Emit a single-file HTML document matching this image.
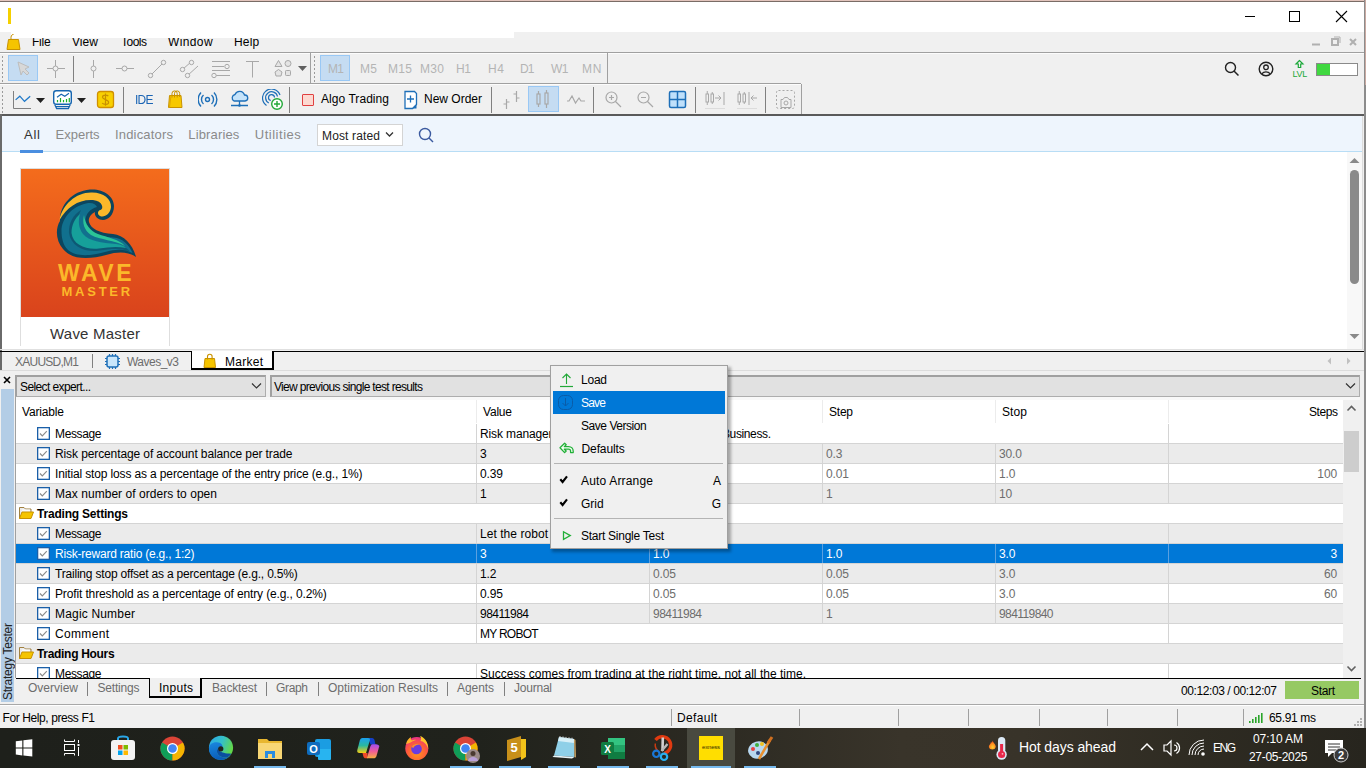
<!DOCTYPE html>
<html><head><meta charset="utf-8"><title>MT5</title>
<style>
html,body{margin:0;padding:0;width:1366px;height:768px;overflow:hidden;background:#f0f0f0}
body{position:relative;font-family:"Liberation Sans",sans-serif}
body div, body svg{position:absolute}
.t{white-space:nowrap}
</style></head><body>
<div style="left:0px;top:0px;width:1366px;height:768px;background:#f0f0f0;"></div>
<div style="left:0px;top:0px;width:1366px;height:32px;background:#fff;"></div>
<div style="left:0px;top:0px;width:1366px;height:1px;background:#e2c4bc;"></div>
<div style="left:0px;top:1px;width:1366px;height:1px;background:#7a6c66;"></div>
<div style="left:10px;top:15px;width:1px;height:2px;background:#6a6a30;"></div>
<div style="left:8px;top:8px;width:3px;height:16px;background:#f5d000;"></div>
<svg style="left:1240px;top:10px;" width="20" height="12" viewBox="0 0 20 12"><path d="M5 6.5h10" stroke="#000" stroke-width="1"/></svg>
<svg style="left:1284px;top:6px;" width="22" height="22" viewBox="0 0 22 22"><rect x="5.5" y="5.5" width="10" height="10" fill="none" stroke="#000" stroke-width="1"/></svg>
<svg style="left:1330px;top:6px;" width="22" height="22" viewBox="0 0 22 22"><path d="M6 5L17 16M17 5L6 16" stroke="#000" stroke-width="1.1"/></svg>
<div style="left:1364px;top:0px;width:2px;height:728px;background:#8c8c8c;"></div>
<div style="left:1365px;top:0px;width:1px;height:85px;background:#c9a9a1;"></div>
<div class="t" style="left:32px;top:36px;font-size:12px;line-height:12px;color:#000;letter-spacing:-0.248px;">File</div>
<div class="t" style="left:72px;top:36px;font-size:12px;line-height:12px;color:#000;letter-spacing:0.068px;">View</div>
<div class="t" style="left:121px;top:36px;font-size:12px;line-height:12px;color:#000;letter-spacing:-0.504px;">Tools</div>
<div class="t" style="left:168px;top:36px;font-size:12px;line-height:12px;color:#000;letter-spacing:0.383px;">Window</div>
<div class="t" style="left:234px;top:36px;font-size:12px;line-height:12px;color:#000;letter-spacing:0.204px;">Help</div>
<div style="left:11px;top:32px;width:503px;height:6px;background:#fff;"></div>
<svg style="left:5px;top:33px;" width="17" height="18" viewBox="0 0 17 18"><path d="M3.5 6.5h10l1.5 10h-13z" fill="#f5c400" stroke="#c89200" stroke-width="1"/><path d="M6 7V4.5C6 2 8 1 8.5 1.5" fill="none" stroke="#c89200" stroke-width="1"/></svg>
<svg style="left:1308px;top:34px;" width="60" height="14" viewBox="0 0 60 14"><path d="M4 10.5h8" stroke="#b0b0b0" stroke-width="2"/><rect x="24" y="5" width="6" height="6" fill="none" stroke="#b0b0b0" stroke-width="2"/><path d="M26 3h6v6" fill="none" stroke="#b0b0b0" stroke-width="1"/><path d="M42 5l6 6M48 5l-6 6" stroke="#b0b0b0" stroke-width="2"/></svg>
<div style="left:0px;top:52px;width:1364px;height:1px;background:#a0a0a0;"></div>
<div style="left:0px;top:53px;width:1364px;height:1px;background:#fcfcfc;"></div>
<div style="left:0px;top:83px;width:801px;height:1px;background:#a0a0a0;"></div>
<div style="left:0px;top:84px;width:801px;height:1px;background:#fcfcfc;"></div>
<div style="left:607px;top:53px;width:1px;height:30px;background:#a0a0a0;"></div>
<div style="left:2px;top:56px;width:1px;height:2px;background:#9a9a9a;"></div>
<div style="left:2px;top:60px;width:1px;height:2px;background:#9a9a9a;"></div>
<div style="left:2px;top:64px;width:1px;height:2px;background:#9a9a9a;"></div>
<div style="left:2px;top:68px;width:1px;height:2px;background:#9a9a9a;"></div>
<div style="left:2px;top:72px;width:1px;height:2px;background:#9a9a9a;"></div>
<div style="left:2px;top:76px;width:1px;height:2px;background:#9a9a9a;"></div>
<div style="left:2px;top:80px;width:1px;height:2px;background:#9a9a9a;"></div>
<div style="left:314px;top:56px;width:1px;height:2px;background:#9a9a9a;"></div>
<div style="left:314px;top:60px;width:1px;height:2px;background:#9a9a9a;"></div>
<div style="left:314px;top:64px;width:1px;height:2px;background:#9a9a9a;"></div>
<div style="left:314px;top:68px;width:1px;height:2px;background:#9a9a9a;"></div>
<div style="left:314px;top:72px;width:1px;height:2px;background:#9a9a9a;"></div>
<div style="left:314px;top:76px;width:1px;height:2px;background:#9a9a9a;"></div>
<div style="left:314px;top:80px;width:1px;height:2px;background:#9a9a9a;"></div>
<div style="left:2px;top:87px;width:1px;height:2px;background:#9a9a9a;"></div>
<div style="left:2px;top:91px;width:1px;height:2px;background:#9a9a9a;"></div>
<div style="left:2px;top:95px;width:1px;height:2px;background:#9a9a9a;"></div>
<div style="left:2px;top:99px;width:1px;height:2px;background:#9a9a9a;"></div>
<div style="left:2px;top:103px;width:1px;height:2px;background:#9a9a9a;"></div>
<div style="left:2px;top:107px;width:1px;height:2px;background:#9a9a9a;"></div>
<div style="left:2px;top:111px;width:1px;height:2px;background:#9a9a9a;"></div>
<div style="left:8px;top:55px;width:30px;height:26px;background:#c5dcf2;box-sizing:border-box;border:1px solid #99c8f5"></div>
<svg style="left:16px;top:60px;" width="16" height="18" viewBox="0 0 16 18"><path d="M2 2L13 7L9 9L13 13L11 15L7 11L5 15Z" fill="#d8d8d8" stroke="#bdbdbd" stroke-width="1"/></svg>
<svg style="left:46px;top:59px;" width="20" height="20" viewBox="0 0 20 20"><path d="M1 9.5h18M9.5 1v18" stroke="#a8a8a8" stroke-width="1"/><circle cx="9.5" cy="9.5" r="2.5" fill="#f0f0f0" stroke="#a8a8a8"/></svg>
<div style="left:73px;top:56px;width:1px;height:26px;background:#808080;"></div>
<svg style="left:84px;top:59px;" width="20" height="20" viewBox="0 0 20 20"><path d="M9.5 1v18" stroke="#a8a8a8"/><circle cx="9.5" cy="9.5" r="2.5" fill="#f0f0f0" stroke="#a8a8a8"/></svg>
<svg style="left:115px;top:59px;" width="20" height="20" viewBox="0 0 20 20"><path d="M1 9.5h18" stroke="#a8a8a8"/><circle cx="9.5" cy="9.5" r="2.5" fill="#f0f0f0" stroke="#a8a8a8"/></svg>
<svg style="left:147px;top:59px;" width="20" height="20" viewBox="0 0 20 20"><path d="M4 16L16 4" stroke="#a8a8a8"/><circle cx="3.5" cy="16.5" r="2.2" fill="#f0f0f0" stroke="#a8a8a8"/><circle cx="16.5" cy="3.5" r="2.2" fill="#f0f0f0" stroke="#a8a8a8"/></svg>
<svg style="left:179px;top:59px;" width="22" height="20" viewBox="0 0 22 20"><path d="M4 10L12 3M8 17L19 7" stroke="#a8a8a8"/><circle cx="3.5" cy="10.5" r="2.2" fill="#f0f0f0" stroke="#a8a8a8"/><circle cx="12.5" cy="3.5" r="2.2" fill="#f0f0f0" stroke="#a8a8a8"/><circle cx="8.5" cy="16.5" r="2.2" fill="#f0f0f0" stroke="#a8a8a8"/></svg>
<svg style="left:211px;top:59px;" width="22" height="20" viewBox="0 0 22 20"><path d="M1 2.5h18M1 7.5h12M1 11.5h18M5 16.5h14" stroke="#a8a8a8"/><circle cx="16" cy="7.5" r="2.2" fill="#f0f0f0" stroke="#a8a8a8"/><circle cx="3" cy="16.5" r="2.2" fill="#f0f0f0" stroke="#a8a8a8"/></svg>
<svg style="left:245px;top:59px;" width="18" height="20" viewBox="0 0 18 20"><path d="M1 2.5h13M7.5 2.5v16" stroke="#a8a8a8"/></svg>
<svg style="left:274px;top:59px;" width="22" height="20" viewBox="0 0 22 20"><path d="M4.5 1.5L8 7.5H1z" fill="#e4e4e4" stroke="#a8a8a8"/><circle cx="14" cy="4.5" r="3" fill="#e4e4e4" stroke="#a8a8a8"/><path d="M4.5 10.5L8 13L7 17H2L1 13z" fill="#e4e4e4" stroke="#a8a8a8"/><rect x="11.5" y="11.5" width="5" height="5" rx="0.8" fill="#e4e4e4" stroke="#a8a8a8"/></svg>
<svg style="left:298px;top:66px;" width="9" height="6" viewBox="0 0 9 6"><path d="M0 0h9L4.5 5z" fill="#606060"/></svg>
<div style="left:310px;top:53px;width:1px;height:30px;background:#a0a0a0;"></div>
<div style="left:320px;top:55px;width:30px;height:26px;background:#c5dcf2;box-sizing:border-box;border:1px solid #99c8f5"></div>
<div class="t" style="left:328px;top:63px;font-size:12px;line-height:12px;color:#b4b4b4;letter-spacing:-0.672px;">M1</div>
<div class="t" style="left:360px;top:63px;font-size:12px;line-height:12px;color:#b4b4b4;letter-spacing:0.328px;">M5</div>
<div class="t" style="left:388px;top:63px;font-size:12px;line-height:12px;color:#b4b4b4;letter-spacing:0.328px;">M15</div>
<div class="t" style="left:420px;top:63px;font-size:12px;line-height:12px;color:#b4b4b4;letter-spacing:0.328px;">M30</div>
<div class="t" style="left:456px;top:63px;font-size:12px;line-height:12px;color:#b4b4b4;letter-spacing:-0.344px;">H1</div>
<div class="t" style="left:488px;top:63px;font-size:12px;line-height:12px;color:#b4b4b4;letter-spacing:0.656px;">H4</div>
<div class="t" style="left:520px;top:63px;font-size:12px;line-height:12px;color:#b4b4b4;letter-spacing:-0.844px;">D1</div>
<div class="t" style="left:551px;top:63px;font-size:12px;line-height:12px;color:#b4b4b4;letter-spacing:-0.500px;">W1</div>
<div class="t" style="left:582px;top:63px;font-size:12px;line-height:12px;color:#b4b4b4;letter-spacing:0.828px;">MN</div>
<div style="left:801px;top:84px;width:1px;height:30px;background:#a0a0a0;"></div>
<svg style="left:12px;top:90px;" width="20" height="20" viewBox="0 0 20 20"><path d="M1.5 1v17.5H19" fill="none" stroke="#808080"/><path d="M3.6 9.9L7.8 6.2L12.5 11.3L18.2 6.2" fill="none" stroke="#1e78c8" stroke-width="1.2"/></svg>
<svg style="left:36px;top:98px;" width="9" height="6" viewBox="0 0 9 6"><path d="M0 0h9L4.5 5z" fill="#202020"/></svg>
<svg style="left:52px;top:89px;" width="22" height="21" viewBox="0 0 22 21"><rect x="1.7" y="1.7" width="17.6" height="13.6" rx="2.6" fill="#fff" stroke="#1565b0" stroke-width="1.4"/><path d="M2.8 15.8L4.6 19.6H16.4L18.2 15.8M3.8 17.7H17.2" fill="none" stroke="#1565b0" stroke-width="1.2"/><path d="M5 8.2L9.2 5.2L12.8 7.3L17 4.3" fill="none" stroke="#1565b0" stroke-width="1.1"/><path d="M5.5 11v2.2M8.5 9v4.2M11.5 11v2.2M14.5 10v3.2M17.3 9v4.2" stroke="#18b028" stroke-width="1.2"/></svg>
<svg style="left:77px;top:98px;" width="9" height="6" viewBox="0 0 9 6"><path d="M0 0h9L4.5 5z" fill="#202020"/></svg>
<svg style="left:96px;top:90px;" width="19" height="19" viewBox="0 0 19 19"><rect x="1.5" y="1.5" width="16" height="16" rx="2.6" fill="#f8d000" stroke="#d09000" stroke-width="1.3"/><path d="M12.3 6.2C11.3 4.8 6.5 4.5 6.5 7.3C6.5 10 12.6 9.2 12.6 12.2C12.6 15.2 7.6 14.8 6.2 13.2M9.5 3.5V15.8" fill="none" stroke="#c89000" stroke-width="1.2"/></svg>
<div style="left:123px;top:87px;width:1px;height:26px;background:#808080;"></div>
<div class="t" style="left:135px;top:94px;font-size:12px;line-height:12px;color:#1a64b4;letter-spacing:-0.758px;transform:scaleY(1.08);transform-origin:0 100%">IDE</div>
<svg style="left:166px;top:89px;" width="19" height="20" viewBox="0 0 19 20"><path d="M3.5 6.5h11.5l1 12h-13.5z" fill="#f7c800" stroke="#c89200" stroke-width="1"/><path d="M6 8.5V4.5a2.6 2.6 0 0 1 5.2 0V8.5M8.5 8.5V4.5a2.6 2.6 0 0 1 5.2 0V8" fill="none" stroke="#c89200" stroke-width="1"/><path d="M3.5 18.5L5 6.5" stroke="#e0a800" stroke-width="1"/></svg>
<svg style="left:198px;top:90px;" width="20" height="20" viewBox="0 0 20 20"><circle cx="9.5" cy="9.5" r="2" fill="none" stroke="#1e6fb8" stroke-width="1.4"/><path d="M5.5 5a6 6 0 0 0 0 9M13.5 5a6 6 0 0 1 0 9M3 2.5a10 10 0 0 0 0 14M16 2.5a10 10 0 0 1 0 14" fill="none" stroke="#1e6fb8" stroke-width="1.4"/></svg>
<svg style="left:230px;top:89px;" width="20" height="21" viewBox="0 0 20 21"><path d="M4 12a3.5 3.5 0 0 1 1-6.5a5 5 0 0 1 9.5 0.5a3 3 0 0 1 0.5 6z" fill="#c5e3fa" stroke="#1e6fb8" stroke-width="1.3"/><path d="M9.5 12v5M1 16.5h17" stroke="#1e6fb8" stroke-width="1.3"/><circle cx="9.5" cy="16.5" r="1.3" fill="#1e6fb8"/></svg>
<svg style="left:262px;top:89px;" width="22" height="22" viewBox="0 0 22 22"><path d="M4.5 16.5A9 9 0 1 1 18 6" fill="none" stroke="#1e6fb8" stroke-width="1.2"/><path d="M6.8 14A6 6 0 1 1 15.5 7.5" fill="none" stroke="#1e6fb8" stroke-width="1.2"/><path d="M8.8 11.5A3 3 0 1 1 12.5 8.5" fill="none" stroke="#1e6fb8" stroke-width="1.2"/><circle cx="15" cy="15" r="5.3" fill="#fff" stroke="#22a838" stroke-width="1.4"/><path d="M15 12v6M12 15h6" stroke="#22a838" stroke-width="1.4"/></svg>
<div style="left:289px;top:87px;width:1px;height:26px;background:#808080;"></div>
<div style="left:302px;top:94px;width:12px;height:12px;background:#fcd9d1;box-sizing:border-box;border:1px solid #e04040;border-radius:1px"></div>
<div class="t" style="left:321px;top:93px;font-size:12px;line-height:12px;color:#000;letter-spacing:0.055px;">Algo Trading</div>
<svg style="left:403px;top:90px;" width="16" height="20" viewBox="0 0 16 20"><path d="M2 1.5h9.5l2 2v11l-4 4H2z" fill="#fff" stroke="#1e6fb8" stroke-width="1.3"/><path d="M9.5 18.5l4-4v4z" fill="#1e6fb8"/><path d="M7.5 5.5v7M4 9h7" stroke="#1e6fb8" stroke-width="1.3"/></svg>
<div class="t" style="left:424px;top:93px;font-size:12px;line-height:12px;color:#000;letter-spacing:-0.002px;">New Order</div>
<div style="left:491px;top:87px;width:1px;height:26px;background:#808080;"></div>
<svg style="left:502px;top:90px;" width="20" height="20" viewBox="0 0 20 20"><path d="M4.5 9v10M4.5 14h-3M4.5 12h3M14.5 1v11M14.5 4h-3M14.5 8h3" stroke="#a8a8a8" stroke-width="1.2"/></svg>
<div style="left:528px;top:86px;width:31px;height:26px;background:#c5dcf2;box-sizing:border-box;border:1px solid #99c8f5"></div>
<svg style="left:533px;top:89px;" width="20" height="20" viewBox="0 0 20 20"><rect x="4" y="5" width="3" height="10" fill="none" stroke="#a8a8a8" stroke-width="1.2"/><path d="M5.5 2v3M5.5 15v3" stroke="#a8a8a8" stroke-width="1.2"/><rect x="12" y="4" width="3" height="11" fill="none" stroke="#a8a8a8" stroke-width="1.2"/><path d="M13.5 1v3M13.5 15v4" stroke="#a8a8a8" stroke-width="1.2"/></svg>
<svg style="left:566px;top:90px;" width="20" height="20" viewBox="0 0 20 20"><path d="M1 11h2L6 6L9.5 13L13 8L15 11h4" fill="none" stroke="#a8a8a8" stroke-width="1.2"/></svg>
<div style="left:593px;top:87px;width:1px;height:26px;background:#808080;"></div>
<svg style="left:604px;top:90px;" width="20" height="20" viewBox="0 0 20 20"><circle cx="7.5" cy="7.5" r="5.5" fill="none" stroke="#a8a8a8" stroke-width="1.2"/><path d="M11.5 11.5L17 17M7.5 5v5M5 7.5h5" stroke="#a8a8a8" stroke-width="1.2"/></svg>
<svg style="left:636px;top:90px;" width="20" height="20" viewBox="0 0 20 20"><circle cx="7.5" cy="7.5" r="5.5" fill="none" stroke="#a8a8a8" stroke-width="1.2"/><path d="M11.5 11.5L17 17M5 7.5h5" stroke="#a8a8a8" stroke-width="1.2"/></svg>
<svg style="left:668px;top:90px;" width="20" height="20" viewBox="0 0 20 20"><rect x="1.5" y="1.5" width="16" height="16" rx="1.5" fill="#bfe0fb" stroke="#1e6fb8" stroke-width="1.5"/><path d="M9.5 1.5v16M1.5 9.5h16" stroke="#1e6fb8" stroke-width="1.5"/></svg>
<div style="left:695px;top:87px;width:1px;height:26px;background:#808080;"></div>
<svg style="left:704px;top:89px;" width="22" height="22" viewBox="0 0 22 22"><rect x="2" y="5" width="2.5" height="8" fill="none" stroke="#a8a8a8"/><path d="M3.25 2v3M3.25 13v3" stroke="#a8a8a8"/><rect x="7" y="5" width="2.5" height="8" fill="none" stroke="#a8a8a8"/><path d="M8.25 3v2M8.25 13v2" stroke="#a8a8a8"/><path d="M11 9h6M14.5 6.5L17 9L14.5 11.5M20 3v13" fill="none" stroke="#a8a8a8"/><path d="M1 19.5h20" stroke="#dcdcdc"/></svg>
<svg style="left:736px;top:89px;" width="22" height="22" viewBox="0 0 22 22"><rect x="2" y="5" width="2.5" height="8" fill="none" stroke="#a8a8a8"/><path d="M3.25 2v3M3.25 13v3" stroke="#a8a8a8"/><rect x="7" y="5" width="2.5" height="8" fill="none" stroke="#a8a8a8"/><path d="M8.25 3v2M8.25 13v2" stroke="#a8a8a8"/><path d="M13 3v13M15 9h6M17.5 6.5L15 9L17.5 11.5" fill="none" stroke="#a8a8a8"/><path d="M1 19.5h20" stroke="#dcdcdc"/></svg>
<div style="left:765px;top:87px;width:1px;height:26px;background:#808080;"></div>
<svg style="left:775px;top:89px;" width="22" height="22" viewBox="0 0 22 22"><rect x="1.5" y="1.5" width="18" height="18" rx="2" fill="none" stroke="#a8a8a8" stroke-dasharray="2 2"/><path d="M6 10.5h2l1.5-2h3l1.5 2h2v8h-10z" fill="none" stroke="#a8a8a8"/><circle cx="11" cy="14" r="2" fill="none" stroke="#a8a8a8"/></svg>
<svg style="left:1224px;top:61px;" width="18" height="18" viewBox="0 0 18 18"><circle cx="6.5" cy="6.5" r="5" fill="none" stroke="#222" stroke-width="1.4"/><path d="M10 10L14.5 14.5" stroke="#222" stroke-width="1.5"/></svg>
<svg style="left:1258px;top:61px;" width="17" height="17" viewBox="0 0 17 17"><circle cx="8" cy="8" r="6.8" fill="none" stroke="#222" stroke-width="1.4"/><circle cx="8" cy="6.3" r="2.3" fill="none" stroke="#222" stroke-width="1.3"/><path d="M3.8 12.8a5 4 0 0 1 8.4 0" fill="none" stroke="#222" stroke-width="1.3"/></svg>
<svg style="left:1292px;top:59px;" width="16" height="19" viewBox="0 0 16 19"><path d="M7.5 1.5L4 5h2.3v3.5h2.4V5H11z" fill="none" stroke="#1aa838" stroke-width="1.2"/><text x="7.8" y="18.3" font-family="Liberation Sans" font-size="9" fill="#1aa838" text-anchor="middle" letter-spacing="-0.3">LVL</text></svg>
<div style="left:1316px;top:63px;width:42px;height:13px;background:#fff;box-sizing:border-box;border:1px solid #8a8a8a"></div>
<div style="left:1317px;top:64px;width:13px;height:11px;background:#40d840;"></div>
<div style="left:0px;top:114px;width:1364px;height:2px;background:#5a5a5a;"></div>
<div style="left:0px;top:114px;width:2px;height:257px;background:#6a6a6a;"></div>
<div style="left:2px;top:116px;width:1360px;height:35px;background:#eef5fd;"></div>
<div style="left:2px;top:151px;width:1360px;height:1px;background:#b8ddf5;"></div>
<div style="left:2px;top:152px;width:1360px;height:198px;background:#fff;"></div>
<div style="left:1362px;top:116px;width:1px;height:234px;background:#dcdcdc;"></div>
<div class="t" style="left:24px;top:128px;font-size:13px;line-height:13px;color:#333;letter-spacing:0.773px;">All</div>
<div style="left:20px;top:150px;width:23px;height:3px;background:#4a8ee0;"></div>
<div class="t" style="left:55.6px;top:128px;font-size:13px;line-height:13px;color:#8a8a8a;letter-spacing:-0.013px;">Experts</div>
<div class="t" style="left:115px;top:128px;font-size:13px;line-height:13px;color:#8a8a8a;letter-spacing:0.181px;">Indicators</div>
<div class="t" style="left:188.3px;top:128px;font-size:13px;line-height:13px;color:#8a8a8a;letter-spacing:0.143px;">Libraries</div>
<div class="t" style="left:254.8px;top:128px;font-size:13px;line-height:13px;color:#8a8a8a;letter-spacing:0.512px;">Utilities</div>
<div style="left:317px;top:124px;width:86px;height:22px;background:#fff;box-sizing:border-box;border:1px solid #d4d4d4"></div>
<div class="t" style="left:322px;top:130px;font-size:12px;line-height:12px;color:#222;letter-spacing:0.144px;">Most rated</div>
<svg style="left:385px;top:131px;" width="10" height="7" viewBox="0 0 10 7"><path d="M1 1.5L4.5 5L8 1.5" fill="none" stroke="#333" stroke-width="1.3"/></svg>
<svg style="left:418px;top:127px;" width="17" height="16" viewBox="0 0 17 16"><circle cx="7" cy="7" r="5.5" fill="none" stroke="#3b5aa0" stroke-width="1.4"/><path d="M11 11L15 15" stroke="#3b5aa0" stroke-width="1.5"/></svg>
<div style="left:20px;top:168px;width:150px;height:178px;background:#fff;box-sizing:border-box;border:1px solid #dedede;border-bottom:none"></div>
<div style="left:21px;top:169px;width:148px;height:148px;background:linear-gradient(#f46c1c,#d9431c);"></div>
<svg style="left:21px;top:169px" width="148" height="148" viewBox="0 0 148 148">
<path d="M39 52C38 38 50 22 69 20.5C82 19.5 93 27 93 37C93 46 87 51 82 51C77 51 73 47 74 43C70 45 67 49 68 53C70 60 78 64 92 65C103 66 112 76 115 88C108 83 98 82 85 86C70 90 52 92 42 80C35 72 34 60 39 52Z" fill="#0b465f"/>
<path d="M38.5 51C41 36 55 23.5 70 23.5C82 23 90.5 30 90 38C89.5 45 83 49 79 47C76 45.5 76.5 41.5 79.5 41C83 40 82 32 72 31C58 30 46 38 38.5 51Z" fill="#fbb82a"/>
<path d="M40.5 62C40.5 50 50 38 65 34.5C71 33 75 35 76 38C69 40 64 45 64.5 53C65.5 63 77 68 92 68.5C102 69 108 76 111.5 84C104 80 96 79.5 84 83C70 87 55 88 47 81C42 76 40.5 69 40.5 62Z" fill="#11708e"/>
<path d="M48 64C47.5 54 52 46 60 41C56 49 55.5 57 60 64C66 72 80 75 95 75.5C102 76 106 79 109 82.5C100 79 90 79.5 79 81.5C65 84 50 78 48 64Z" fill="#0b465f" opacity="0.55"/>
<path d="M50.5 64C50.5 56 54 49 59 45C57 52 57.5 59 62 65C68 72 81 74 95 75C100 75.5 103 77 105 79C96 77 88 78 78 79.5C65 81 52 76 50.5 64Z" fill="#16a09a"/>
<path d="M63 46C61 54 63 61 70 66C79 71 94 71 104 77C98 70 86 68.5 77 65C69 62 64 55 63 46Z" fill="#2bc497"/>
<text x="75" y="112" font-family="Liberation Sans" font-size="23" font-weight="bold" fill="#fbb82a" text-anchor="middle" letter-spacing="2.5">WAVE</text>
<text x="76.2" y="126.6" font-family="Liberation Sans" font-size="13" font-weight="bold" fill="#fbb82a" text-anchor="middle" letter-spacing="2.75">MASTER</text>
</svg>

<div class="t" style="left:50px;top:326px;font-size:15px;line-height:15px;color:#333;letter-spacing:0.220px;">Wave Master</div>
<div style="left:1347px;top:152px;width:15px;height:198px;background:#f8f8f8;"></div>
<svg style="left:1349px;top:157px;" width="11" height="7" viewBox="0 0 11 7"><path d="M0.5 6L5.5 1L10.5 6z" fill="#8a8a8a"/></svg>
<div style="left:1350px;top:170px;width:9px;height:114px;background:#8a8a8a;border-radius:4.5px"></div>
<svg style="left:1349px;top:333px;" width="11" height="7" viewBox="0 0 11 7"><path d="M0.5 1L5.5 6L10.5 1z" fill="#8a8a8a"/></svg>
<div style="left:0px;top:349px;width:1364px;height:1px;background:#e0e0e0;"></div>
<div style="left:0px;top:351px;width:1364px;height:1px;background:#000;"></div>
<div style="left:2px;top:352px;width:1362px;height:18px;background:#f0f0f0;"></div>
<div style="left:0px;top:370px;width:1364px;height:1px;background:#dcdcdc;"></div>
<div class="t" style="left:15px;top:356px;font-size:12px;line-height:12px;color:#6d6d6d;letter-spacing:-0.752px;">XAUUSD,M1</div>
<div style="left:92px;top:354px;width:1px;height:14px;background:#808080;"></div>
<svg style="left:104px;top:353px;" width="18" height="18" viewBox="0 0 18 18"><rect x="3" y="3" width="11" height="11" rx="2" fill="#c9e6fb" stroke="#1e6fb8" stroke-width="1.5"/><path d="M5.5 1v2M8.5 1v2M11.5 1v2M5.5 14v2M8.5 14v2M11.5 14v2M1 5.5h2M1 8.5h2M1 11.5h2M14 5.5h2M14 8.5h2M14 11.5h2" stroke="#1e6fb8" stroke-width="1.2"/></svg>
<div class="t" style="left:127px;top:356px;font-size:12px;line-height:12px;color:#6d6d6d;letter-spacing:-0.511px;">Waves_v3</div>
<div style="left:191px;top:351px;width:83px;height:19px;background:#fff;box-sizing:border-box;border:1px solid #000;border-top:none;border-width:0 2px 2px 1px"></div>
<svg style="left:203px;top:353px;" width="14" height="16" viewBox="0 0 14 16"><path d="M2 5.5h9.5l1 9h-11.5z" fill="#f5c400" stroke="#c89200"/><path d="M4.5 6.5V3.5a2.3 2.3 0 0 1 4.6 0v3" fill="none" stroke="#c89200" stroke-width="1.1"/></svg>
<div class="t" style="left:225px;top:356px;font-size:12px;line-height:12px;color:#000;letter-spacing:0.263px;">Market</div>
<svg style="left:1324px;top:355px;" width="30" height="12" viewBox="0 0 30 12"><path d="M7 2.5L3.5 6L7 9.5z" fill="#c0c0c0"/><path d="M23 2.5L26.5 6L23 9.5z" fill="#c0c0c0"/></svg>
<div style="left:0px;top:371px;width:1364px;height:334px;background:#f0f0f0;"></div>
<svg style="left:2px;top:375px;" width="10" height="10" viewBox="0 0 10 10"><path d="M2 2L8 8M8 2L2 8" stroke="#000" stroke-width="1.6"/></svg>
<div style="left:1px;top:389px;width:13px;height:313px;background:#b3cde6;"></div>
<div class="t" style="left:-42px;top:644px;width:100px;height:12px;font-size:12px;line-height:12px;color:#222;letter-spacing:-0.249px;transform:rotate(-90deg);transform-origin:50% 50%;text-align:left">Strategy Tester</div>
<div style="left:15px;top:397px;width:1px;height:281px;background:#a0a0a0;"></div>
<div style="left:15px;top:375px;width:251px;height:22px;background:#e1e1e1;box-sizing:border-box;border:1px solid #adadad;border-top:2px solid #a0a0a0;border-left:2px solid #a0a0a0"></div>
<div class="t" style="left:20px;top:381px;font-size:12px;line-height:12px;color:#000;letter-spacing:-0.603px;">Select expert...</div>
<svg style="left:251px;top:382px;" width="11" height="8" viewBox="0 0 11 8"><path d="M1 1.5L5.5 6L10 1.5" fill="none" stroke="#333" stroke-width="1.2"/></svg>
<div style="left:270px;top:375px;width:1090px;height:22px;background:#e1e1e1;box-sizing:border-box;border:1px solid #adadad;border-top:2px solid #a0a0a0;border-left:2px solid #a0a0a0"></div>
<div class="t" style="left:274px;top:381px;font-size:12px;line-height:12px;color:#000;letter-spacing:-0.673px;">View previous single test results</div>
<svg style="left:1345px;top:382px;" width="11" height="8" viewBox="0 0 11 8"><path d="M1 1.5L5.5 6L10 1.5" fill="none" stroke="#333" stroke-width="1.2"/></svg>
<div style="left:16px;top:397px;width:1344px;height:3px;background:#f8f8f8;"></div>
<div style="left:16px;top:400px;width:1327px;height:278px;background:#fff;"></div>
<div style="left:476px;top:400px;width:1px;height:23px;background:#ececec;"></div>
<div style="left:649px;top:400px;width:1px;height:23px;background:#ececec;"></div>
<div style="left:822px;top:400px;width:1px;height:23px;background:#ececec;"></div>
<div style="left:995px;top:400px;width:1px;height:23px;background:#ececec;"></div>
<div style="left:1168px;top:400px;width:1px;height:23px;background:#ececec;"></div>
<div class="t" style="left:22px;top:406px;font-size:12px;line-height:12px;color:#000;letter-spacing:-0.163px;">Variable</div>
<div class="t" style="left:483px;top:406px;font-size:12px;line-height:12px;color:#000;letter-spacing:-0.203px;">Value</div>
<div class="t" style="left:656px;top:406px;font-size:12px;line-height:12px;color:#000;letter-spacing:-0.086px;">Start</div>
<div class="t" style="left:829px;top:406px;font-size:12px;line-height:12px;color:#000;letter-spacing:-0.229px;">Step</div>
<div class="t" style="left:1002px;top:406px;font-size:12px;line-height:12px;color:#000;letter-spacing:0.104px;">Stop</div>
<div class="t" style="left:1309px;top:406px;font-size:12px;line-height:12px;color:#000;letter-spacing:-0.422px;">Steps</div>
<div style="left:16px;top:423px;width:1327px;height:255px;overflow:hidden">
<div style="left:0px;top:1px;width:1327px;height:19px;background:#fff;"></div>
<div style="left:0px;top:20px;width:1327px;height:1px;background:#d4d4d4;"></div>
<svg style="left:21px;top:4px;" width="13" height="13" viewBox="0 0 13 13"><rect x="0.65" y="0.65" width="11.7" height="11.7" fill="#fff" stroke="#1a5fa8" stroke-width="1.3"/><path d="M3 6.5L5.3 8.8L9.8 4.2" fill="none" stroke="#8c8c8c" stroke-width="1.2"/></svg>
<div class="t" style="left:39px;top:5px;font-size:12px;line-height:12px;color:#000;letter-spacing:-0.367px;">Message</div>
<div style="left:460px;top:1px;width:1px;height:19px;background:#d4d4d4;"></div>
<div style="left:1152px;top:1px;width:1px;height:19px;background:#d4d4d4;"></div>
<div class="t" style="left:464px;top:5px;font-size:12px;line-height:12px;color:#000;letter-spacing:-0.13px;">Risk management is the key</div>
<div class="t" style="left:706px;top:5px;font-size:12px;line-height:12px;color:#000;letter-spacing:-0.379px;">Business.</div>
<div style="left:0px;top:21px;width:1327px;height:19px;background:#ebebeb;"></div>
<div style="left:0px;top:40px;width:1327px;height:1px;background:#d4d4d4;"></div>
<svg style="left:21px;top:24px;" width="13" height="13" viewBox="0 0 13 13"><rect x="0.65" y="0.65" width="11.7" height="11.7" fill="#fff" stroke="#1a5fa8" stroke-width="1.3"/><path d="M3 6.5L5.3 8.8L9.8 4.2" fill="none" stroke="#8c8c8c" stroke-width="1.2"/></svg>
<div class="t" style="left:39px;top:25px;font-size:12px;line-height:12px;color:#000;letter-spacing:-0.108px;">Risk percentage of account balance per trade</div>
<div style="left:460px;top:21px;width:1px;height:19px;background:#d4d4d4;"></div>
<div style="left:633px;top:21px;width:1px;height:19px;background:#d4d4d4;"></div>
<div style="left:806px;top:21px;width:1px;height:19px;background:#d4d4d4;"></div>
<div style="left:979px;top:21px;width:1px;height:19px;background:#d4d4d4;"></div>
<div style="left:1152px;top:21px;width:1px;height:19px;background:#d4d4d4;"></div>
<div class="t" style="left:464px;top:25px;font-size:12px;line-height:12px;color:#000;letter-spacing:-0.13px;">3</div>
<div class="t" style="left:637px;top:25px;font-size:12px;line-height:12px;color:#6d6d6d;letter-spacing:-0.13px;">3</div>
<div class="t" style="left:810px;top:25px;font-size:12px;line-height:12px;color:#6d6d6d;letter-spacing:-0.13px;">0.3</div>
<div class="t" style="left:983px;top:25px;font-size:12px;line-height:12px;color:#6d6d6d;letter-spacing:-0.13px;">30.0</div>
<div style="left:0px;top:41px;width:1327px;height:19px;background:#fff;"></div>
<div style="left:0px;top:60px;width:1327px;height:1px;background:#d4d4d4;"></div>
<svg style="left:21px;top:44px;" width="13" height="13" viewBox="0 0 13 13"><rect x="0.65" y="0.65" width="11.7" height="11.7" fill="#fff" stroke="#1a5fa8" stroke-width="1.3"/><path d="M3 6.5L5.3 8.8L9.8 4.2" fill="none" stroke="#8c8c8c" stroke-width="1.2"/></svg>
<div class="t" style="left:39px;top:45px;font-size:12px;line-height:12px;color:#000;letter-spacing:-0.140px;">Initial stop loss as a percentage of the entry price (e.g., 1%)</div>
<div style="left:460px;top:41px;width:1px;height:19px;background:#d4d4d4;"></div>
<div style="left:633px;top:41px;width:1px;height:19px;background:#d4d4d4;"></div>
<div style="left:806px;top:41px;width:1px;height:19px;background:#d4d4d4;"></div>
<div style="left:979px;top:41px;width:1px;height:19px;background:#d4d4d4;"></div>
<div style="left:1152px;top:41px;width:1px;height:19px;background:#d4d4d4;"></div>
<div class="t" style="left:464px;top:45px;font-size:12px;line-height:12px;color:#000;letter-spacing:-0.13px;">0.39</div>
<div class="t" style="left:637px;top:45px;font-size:12px;line-height:12px;color:#6d6d6d;letter-spacing:-0.13px;">0.01</div>
<div class="t" style="left:810px;top:45px;font-size:12px;line-height:12px;color:#6d6d6d;letter-spacing:-0.13px;">0.01</div>
<div class="t" style="left:983px;top:45px;font-size:12px;line-height:12px;color:#6d6d6d;letter-spacing:-0.13px;">1.0</div>
<div class="t" style="left:1321px;top:45px;font-size:12px;line-height:12px;color:#6d6d6d;letter-spacing:-0.13px;right:auto;transform:translateX(-100%)">100</div>
<div style="left:0px;top:61px;width:1327px;height:19px;background:#ebebeb;"></div>
<div style="left:0px;top:80px;width:1327px;height:1px;background:#d4d4d4;"></div>
<svg style="left:21px;top:64px;" width="13" height="13" viewBox="0 0 13 13"><rect x="0.65" y="0.65" width="11.7" height="11.7" fill="#fff" stroke="#1a5fa8" stroke-width="1.3"/><path d="M3 6.5L5.3 8.8L9.8 4.2" fill="none" stroke="#8c8c8c" stroke-width="1.2"/></svg>
<div class="t" style="left:39px;top:65px;font-size:12px;line-height:12px;color:#000;letter-spacing:0.046px;">Max number of orders to open</div>
<div style="left:460px;top:61px;width:1px;height:19px;background:#d4d4d4;"></div>
<div style="left:633px;top:61px;width:1px;height:19px;background:#d4d4d4;"></div>
<div style="left:806px;top:61px;width:1px;height:19px;background:#d4d4d4;"></div>
<div style="left:979px;top:61px;width:1px;height:19px;background:#d4d4d4;"></div>
<div style="left:1152px;top:61px;width:1px;height:19px;background:#d4d4d4;"></div>
<div class="t" style="left:464px;top:65px;font-size:12px;line-height:12px;color:#000;letter-spacing:-0.13px;">1</div>
<div class="t" style="left:637px;top:65px;font-size:12px;line-height:12px;color:#6d6d6d;letter-spacing:-0.13px;">1</div>
<div class="t" style="left:810px;top:65px;font-size:12px;line-height:12px;color:#6d6d6d;letter-spacing:-0.13px;">1</div>
<div class="t" style="left:983px;top:65px;font-size:12px;line-height:12px;color:#6d6d6d;letter-spacing:-0.13px;">10</div>
<div style="left:0px;top:81px;width:1327px;height:19px;background:#fff;"></div>
<div style="left:0px;top:100px;width:1327px;height:1px;background:#d4d4d4;"></div>
<svg style="left:2px;top:82px;" width="17" height="15" viewBox="0 0 17 15"><path d="M1.5 13.5V2.5h4.5l1.5 1.5h5.5v3" fill="#ececec" stroke="#a08040" stroke-width="1"/><rect x="4" y="4.5" width="8" height="4" fill="#fafafa"/><path d="M1.5 13.5L4 7h11.5L13 13.5z" fill="#f5c400" stroke="#c89200" stroke-width="1" stroke-linejoin="round"/></svg>
<div class="t" style="left:21px;top:85px;font-size:12px;line-height:12px;color:#000;letter-spacing:-0.201px;font-weight:bold">Trading Settings</div>
<div style="left:0px;top:101px;width:1327px;height:19px;background:#ebebeb;"></div>
<div style="left:0px;top:120px;width:1327px;height:1px;background:#d4d4d4;"></div>
<svg style="left:21px;top:104px;" width="13" height="13" viewBox="0 0 13 13"><rect x="0.65" y="0.65" width="11.7" height="11.7" fill="#fff" stroke="#1a5fa8" stroke-width="1.3"/><path d="M3 6.5L5.3 8.8L9.8 4.2" fill="none" stroke="#8c8c8c" stroke-width="1.2"/></svg>
<div class="t" style="left:39px;top:105px;font-size:12px;line-height:12px;color:#000;letter-spacing:-0.367px;">Message</div>
<div style="left:460px;top:101px;width:1px;height:19px;background:#d4d4d4;"></div>
<div style="left:1152px;top:101px;width:1px;height:19px;background:#d4d4d4;"></div>
<div class="t" style="left:464px;top:105px;font-size:12px;line-height:12px;color:#000;letter-spacing:0.051px;">Let the robot</div>
<div style="left:0px;top:121px;width:1327px;height:19px;background:#0078d7;"></div>
<div style="left:0px;top:140px;width:1327px;height:1px;background:#d4d4d4;"></div>
<svg style="left:21px;top:124px;" width="13" height="13" viewBox="0 0 13 13"><rect x="0.65" y="0.65" width="11.7" height="11.7" fill="#fff" stroke="#1a5fa8" stroke-width="1.3"/><path d="M3 6.5L5.3 8.8L9.8 4.2" fill="none" stroke="#8c8c8c" stroke-width="1.2"/></svg>
<div class="t" style="left:39px;top:125px;font-size:12px;line-height:12px;color:#fff;letter-spacing:-0.210px;">Risk-reward ratio (e.g., 1:2)</div>
<div style="left:460px;top:121px;width:1px;height:19px;background:#5aa0e0;"></div>
<div style="left:633px;top:121px;width:1px;height:19px;background:#5aa0e0;"></div>
<div style="left:806px;top:121px;width:1px;height:19px;background:#5aa0e0;"></div>
<div style="left:979px;top:121px;width:1px;height:19px;background:#5aa0e0;"></div>
<div style="left:1152px;top:121px;width:1px;height:19px;background:#5aa0e0;"></div>
<div class="t" style="left:464px;top:125px;font-size:12px;line-height:12px;color:#fff;letter-spacing:-0.13px;">3</div>
<div class="t" style="left:637px;top:125px;font-size:12px;line-height:12px;color:#fff;letter-spacing:-0.13px;">1.0</div>
<div class="t" style="left:810px;top:125px;font-size:12px;line-height:12px;color:#fff;letter-spacing:-0.13px;">1.0</div>
<div class="t" style="left:983px;top:125px;font-size:12px;line-height:12px;color:#fff;letter-spacing:-0.13px;">3.0</div>
<div class="t" style="left:1321px;top:125px;font-size:12px;line-height:12px;color:#fff;letter-spacing:-0.13px;right:auto;transform:translateX(-100%)">3</div>
<div style="left:0px;top:141px;width:1327px;height:19px;background:#ebebeb;"></div>
<div style="left:0px;top:160px;width:1327px;height:1px;background:#d4d4d4;"></div>
<svg style="left:21px;top:144px;" width="13" height="13" viewBox="0 0 13 13"><rect x="0.65" y="0.65" width="11.7" height="11.7" fill="#fff" stroke="#1a5fa8" stroke-width="1.3"/><path d="M3 6.5L5.3 8.8L9.8 4.2" fill="none" stroke="#8c8c8c" stroke-width="1.2"/></svg>
<div class="t" style="left:39px;top:145px;font-size:12px;line-height:12px;color:#000;letter-spacing:-0.197px;">Trailing stop offset as a percentage (e.g., 0.5%)</div>
<div style="left:460px;top:141px;width:1px;height:19px;background:#d4d4d4;"></div>
<div style="left:633px;top:141px;width:1px;height:19px;background:#d4d4d4;"></div>
<div style="left:806px;top:141px;width:1px;height:19px;background:#d4d4d4;"></div>
<div style="left:979px;top:141px;width:1px;height:19px;background:#d4d4d4;"></div>
<div style="left:1152px;top:141px;width:1px;height:19px;background:#d4d4d4;"></div>
<div class="t" style="left:464px;top:145px;font-size:12px;line-height:12px;color:#000;letter-spacing:-0.13px;">1.2</div>
<div class="t" style="left:637px;top:145px;font-size:12px;line-height:12px;color:#6d6d6d;letter-spacing:-0.13px;">0.05</div>
<div class="t" style="left:810px;top:145px;font-size:12px;line-height:12px;color:#6d6d6d;letter-spacing:-0.13px;">0.05</div>
<div class="t" style="left:983px;top:145px;font-size:12px;line-height:12px;color:#6d6d6d;letter-spacing:-0.13px;">3.0</div>
<div class="t" style="left:1321px;top:145px;font-size:12px;line-height:12px;color:#6d6d6d;letter-spacing:-0.13px;right:auto;transform:translateX(-100%)">60</div>
<div style="left:0px;top:161px;width:1327px;height:19px;background:#fff;"></div>
<div style="left:0px;top:180px;width:1327px;height:1px;background:#d4d4d4;"></div>
<svg style="left:21px;top:164px;" width="13" height="13" viewBox="0 0 13 13"><rect x="0.65" y="0.65" width="11.7" height="11.7" fill="#fff" stroke="#1a5fa8" stroke-width="1.3"/><path d="M3 6.5L5.3 8.8L9.8 4.2" fill="none" stroke="#8c8c8c" stroke-width="1.2"/></svg>
<div class="t" style="left:39px;top:165px;font-size:12px;line-height:12px;color:#000;letter-spacing:-0.134px;">Profit threshold as a percentage of entry (e.g., 0.2%)</div>
<div style="left:460px;top:161px;width:1px;height:19px;background:#d4d4d4;"></div>
<div style="left:633px;top:161px;width:1px;height:19px;background:#d4d4d4;"></div>
<div style="left:806px;top:161px;width:1px;height:19px;background:#d4d4d4;"></div>
<div style="left:979px;top:161px;width:1px;height:19px;background:#d4d4d4;"></div>
<div style="left:1152px;top:161px;width:1px;height:19px;background:#d4d4d4;"></div>
<div class="t" style="left:464px;top:165px;font-size:12px;line-height:12px;color:#000;letter-spacing:-0.13px;">0.95</div>
<div class="t" style="left:637px;top:165px;font-size:12px;line-height:12px;color:#6d6d6d;letter-spacing:-0.13px;">0.05</div>
<div class="t" style="left:810px;top:165px;font-size:12px;line-height:12px;color:#6d6d6d;letter-spacing:-0.13px;">0.05</div>
<div class="t" style="left:983px;top:165px;font-size:12px;line-height:12px;color:#6d6d6d;letter-spacing:-0.13px;">3.0</div>
<div class="t" style="left:1321px;top:165px;font-size:12px;line-height:12px;color:#6d6d6d;letter-spacing:-0.13px;right:auto;transform:translateX(-100%)">60</div>
<div style="left:0px;top:181px;width:1327px;height:19px;background:#ebebeb;"></div>
<div style="left:0px;top:200px;width:1327px;height:1px;background:#d4d4d4;"></div>
<svg style="left:21px;top:184px;" width="13" height="13" viewBox="0 0 13 13"><rect x="0.65" y="0.65" width="11.7" height="11.7" fill="#fff" stroke="#1a5fa8" stroke-width="1.3"/><path d="M3 6.5L5.3 8.8L9.8 4.2" fill="none" stroke="#8c8c8c" stroke-width="1.2"/></svg>
<div class="t" style="left:39px;top:185px;font-size:12px;line-height:12px;color:#000;letter-spacing:0.179px;">Magic Number</div>
<div style="left:460px;top:181px;width:1px;height:19px;background:#d4d4d4;"></div>
<div style="left:633px;top:181px;width:1px;height:19px;background:#d4d4d4;"></div>
<div style="left:806px;top:181px;width:1px;height:19px;background:#d4d4d4;"></div>
<div style="left:979px;top:181px;width:1px;height:19px;background:#d4d4d4;"></div>
<div style="left:1152px;top:181px;width:1px;height:19px;background:#d4d4d4;"></div>
<div class="t" style="left:464px;top:185px;font-size:12px;line-height:12px;color:#000;letter-spacing:-0.500px;">98411984</div>
<div class="t" style="left:637px;top:185px;font-size:12px;line-height:12px;color:#6d6d6d;letter-spacing:-0.500px;">98411984</div>
<div class="t" style="left:810px;top:185px;font-size:12px;line-height:12px;color:#6d6d6d;letter-spacing:-0.13px;">1</div>
<div class="t" style="left:983px;top:185px;font-size:12px;line-height:12px;color:#6d6d6d;letter-spacing:-0.586px;">984119840</div>
<div style="left:0px;top:201px;width:1327px;height:19px;background:#fff;"></div>
<div style="left:0px;top:220px;width:1327px;height:1px;background:#d4d4d4;"></div>
<svg style="left:21px;top:204px;" width="13" height="13" viewBox="0 0 13 13"><rect x="0.65" y="0.65" width="11.7" height="11.7" fill="#fff" stroke="#1a5fa8" stroke-width="1.3"/><path d="M3 6.5L5.3 8.8L9.8 4.2" fill="none" stroke="#8c8c8c" stroke-width="1.2"/></svg>
<div class="t" style="left:39px;top:205px;font-size:12px;line-height:12px;color:#000;letter-spacing:0.331px;">Comment</div>
<div style="left:460px;top:201px;width:1px;height:19px;background:#d4d4d4;"></div>
<div style="left:1152px;top:201px;width:1px;height:19px;background:#d4d4d4;"></div>
<div class="t" style="left:464px;top:205px;font-size:12px;line-height:12px;color:#000;letter-spacing:-0.728px;">MY ROBOT</div>
<div style="left:0px;top:221px;width:1327px;height:19px;background:#ebebeb;"></div>
<div style="left:0px;top:240px;width:1327px;height:1px;background:#d4d4d4;"></div>
<svg style="left:2px;top:222px;" width="17" height="15" viewBox="0 0 17 15"><path d="M1.5 13.5V2.5h4.5l1.5 1.5h5.5v3" fill="#ececec" stroke="#a08040" stroke-width="1"/><rect x="4" y="4.5" width="8" height="4" fill="#fafafa"/><path d="M1.5 13.5L4 7h11.5L13 13.5z" fill="#f5c400" stroke="#c89200" stroke-width="1" stroke-linejoin="round"/></svg>
<div class="t" style="left:21px;top:225px;font-size:12px;line-height:12px;color:#000;letter-spacing:-0.312px;font-weight:bold">Trading Hours</div>
<div style="left:0px;top:241px;width:1327px;height:19px;background:#fff;"></div>
<div style="left:0px;top:260px;width:1327px;height:1px;background:#d4d4d4;"></div>
<svg style="left:21px;top:244px;" width="13" height="13" viewBox="0 0 13 13"><rect x="0.65" y="0.65" width="11.7" height="11.7" fill="#fff" stroke="#1a5fa8" stroke-width="1.3"/><path d="M3 6.5L5.3 8.8L9.8 4.2" fill="none" stroke="#8c8c8c" stroke-width="1.2"/></svg>
<div class="t" style="left:39px;top:245px;font-size:12px;line-height:12px;color:#000;letter-spacing:-0.367px;">Message</div>
<div style="left:460px;top:241px;width:1px;height:19px;background:#d4d4d4;"></div>
<div style="left:1152px;top:241px;width:1px;height:19px;background:#d4d4d4;"></div>
<div class="t" style="left:464px;top:245px;font-size:12px;line-height:12px;color:#000;letter-spacing:0.008px;">Success comes from trading at the right time, not all the time.</div>
</div>
<div style="left:1343px;top:400px;width:17px;height:278px;background:#f0f0f0;"></div>
<svg style="left:1346px;top:404px;" width="11" height="8" viewBox="0 0 11 8"><path d="M1.5 6.5L5.5 2.5L9.5 6.5" fill="none" stroke="#606060" stroke-width="1.6"/></svg>
<div style="left:1344px;top:431px;width:15px;height:41px;background:#cdcdcd;"></div>
<svg style="left:1346px;top:665px;" width="11" height="8" viewBox="0 0 11 8"><path d="M1.5 1.5L5.5 5.5L9.5 1.5" fill="none" stroke="#606060" stroke-width="1.6"/></svg>
<div style="left:1360px;top:400px;width:3px;height:278px;background:#f0f0f0;"></div>
<div style="left:16px;top:678px;width:1345px;height:1px;background:#000;"></div>
<div style="left:149px;top:678px;width:53px;height:20px;background:#f0f0f0;box-sizing:border-box;border:1px solid #000;border-top:none;border-width:0 2px 2px 1px"></div>
<div class="t" style="left:28px;top:682px;font-size:12px;line-height:12px;color:#6d6d6d;letter-spacing:-0.002px;">Overview</div>
<div class="t" style="left:97.5px;top:682px;font-size:12px;line-height:12px;color:#6d6d6d;letter-spacing:-0.194px;">Settings</div>
<div class="t" style="left:159px;top:682px;font-size:12px;line-height:12px;color:#000;letter-spacing:0.259px;">Inputs</div>
<div class="t" style="left:212px;top:682px;font-size:12px;line-height:12px;color:#6d6d6d;letter-spacing:-0.147px;">Backtest</div>
<div class="t" style="left:276px;top:682px;font-size:12px;line-height:12px;color:#6d6d6d;letter-spacing:-0.340px;">Graph</div>
<div class="t" style="left:328px;top:682px;font-size:12px;line-height:12px;color:#6d6d6d;letter-spacing:-0.002px;">Optimization Results</div>
<div class="t" style="left:457px;top:682px;font-size:12px;line-height:12px;color:#6d6d6d;letter-spacing:-0.072px;">Agents</div>
<div class="t" style="left:514px;top:682px;font-size:12px;line-height:12px;color:#6d6d6d;letter-spacing:-0.227px;">Journal</div>
<div style="left:87px;top:682px;width:1px;height:14px;background:#808080;"></div>
<div style="left:266px;top:682px;width:1px;height:14px;background:#808080;"></div>
<div style="left:318px;top:682px;width:1px;height:14px;background:#808080;"></div>
<div style="left:447px;top:682px;width:1px;height:14px;background:#808080;"></div>
<div style="left:504px;top:682px;width:1px;height:14px;background:#808080;"></div>
<div class="t" style="left:1181px;top:685px;font-size:12px;line-height:12px;color:#000;letter-spacing:-0.413px;">00:12:03 / 00:12:07</div>
<div style="left:1285px;top:681px;width:74px;height:18px;background:#96c963;"></div>
<div class="t" style="left:1311px;top:685px;font-size:12px;line-height:12px;color:#000;letter-spacing:-0.336px;">Start</div>
<div style="left:0px;top:704px;width:1364px;height:1px;background:#a8a8a8;"></div>
<div style="left:0px;top:705px;width:1364px;height:1px;background:#fff;"></div>
<div class="t" style="left:2.5px;top:712px;font-size:12px;line-height:12px;color:#000;letter-spacing:-0.404px;">For Help, press F1</div>
<div style="left:671px;top:709px;width:1px;height:17px;background:#a0a0a0;"></div>
<div style="left:799px;top:709px;width:1px;height:17px;background:#a0a0a0;"></div>
<div style="left:898px;top:709px;width:1px;height:17px;background:#a0a0a0;"></div>
<div style="left:968px;top:709px;width:1px;height:17px;background:#a0a0a0;"></div>
<div style="left:1039px;top:709px;width:1px;height:17px;background:#a0a0a0;"></div>
<div style="left:1107px;top:709px;width:1px;height:17px;background:#a0a0a0;"></div>
<div style="left:1177px;top:709px;width:1px;height:17px;background:#a0a0a0;"></div>
<div style="left:1243px;top:709px;width:1px;height:17px;background:#a0a0a0;"></div>
<div class="t" style="left:677px;top:712px;font-size:12px;line-height:12px;color:#000;letter-spacing:0.328px;">Default</div>
<svg style="left:1248px;top:711px;" width="16" height="13" viewBox="0 0 16 13"><rect x="1" y="10" width="1.6" height="2" fill="#2aa52a"/><rect x="4" y="8" width="1.6" height="4" fill="#2aa52a"/><rect x="7" y="6" width="1.6" height="6" fill="#2aa52a"/><rect x="10" y="4" width="1.6" height="8" fill="#2aa52a"/><rect x="13" y="2" width="1.6" height="10" fill="#2aa52a"/></svg>
<div class="t" style="left:1269px;top:712px;font-size:12px;line-height:12px;color:#000;letter-spacing:-0.337px;">65.91 ms</div>
<svg style="left:1352px;top:716px;" width="12" height="12" viewBox="0 0 12 12"><g fill="#b0b0b0"><rect x="8" y="2" width="2" height="2"/><rect x="5" y="5" width="2" height="2"/><rect x="8" y="5" width="2" height="2"/><rect x="2" y="8" width="2" height="2"/><rect x="5" y="8" width="2" height="2"/><rect x="8" y="8" width="2" height="2"/></g></svg>
<div style="left:552px;top:367px;width:179px;height:185px;background:rgba(0,0,0,0.30);filter:blur(1.5px)"></div>
<div style="left:550px;top:365px;width:178px;height:184px;background:#f0f0f0;box-sizing:border-box;border:1px solid #a0a0a0"></div>
<svg style="left:558px;top:371px;" width="18" height="18" viewBox="0 0 18 18"><path d="M8.5 13V3M4.5 7L8.5 3L12.5 7" fill="none" stroke="#22a838" stroke-width="1.1"/><path d="M2 15.5h13" stroke="#22a838" stroke-width="1.2"/></svg>
<div class="t" style="left:581px;top:374px;font-size:12px;line-height:12px;color:#000;letter-spacing:-0.234px;">Load</div>
<div style="left:553px;top:391px;width:172px;height:23px;background:#0078d7;"></div>
<svg style="left:557px;top:394px;" width="18" height="18" viewBox="0 0 18 18"><rect x="1.5" y="1.5" width="14" height="14" rx="5" fill="none" stroke="#0a5ca8" stroke-width="1"/><path d="M8.5 4v8M5.5 9L8.5 12L11.5 9" fill="none" stroke="#0a5ca8" stroke-width="1"/></svg>
<div class="t" style="left:581px;top:397px;font-size:12px;line-height:12px;color:#fff;letter-spacing:-0.786px;">Save</div>
<div class="t" style="left:581px;top:420px;font-size:12px;line-height:12px;color:#000;letter-spacing:-0.456px;">Save Version</div>
<svg style="left:558px;top:440px;" width="18" height="16" viewBox="0 0 18 16"><path d="M2 7.7L6.6 3.2L8.2 4.8L6.3 6.6H10.5C13.6 6.6 15.2 8.6 15.2 11.2V12.6H12.6V11.2C12.6 10 11.9 9.2 10.5 9.2H6.3L8.2 11L6.6 12.6Z" fill="#f4fff4" stroke="#22b038" stroke-width="1.3" stroke-linejoin="round"/></svg>
<div class="t" style="left:581.5px;top:443px;font-size:12px;line-height:12px;color:#000;letter-spacing:-0.104px;">Defaults</div>
<div style="left:554px;top:463px;width:169px;height:1px;background:#b4b4b4;"></div>
<svg style="left:558px;top:474px;" width="12" height="10" viewBox="0 0 12 10"><path d="M2.3 5.3L4.6 8L9 2.3" fill="none" stroke="#000" stroke-width="2.1"/></svg>
<div class="t" style="left:581px;top:475px;font-size:12px;line-height:12px;color:#000;letter-spacing:0.176px;">Auto Arrange</div>
<div class="t" style="right:645px;top:475px;font-size:12px;line-height:12px;color:#000;">A</div>
<svg style="left:558px;top:497px;" width="12" height="10" viewBox="0 0 12 10"><path d="M2.3 5.3L4.6 8L9 2.3" fill="none" stroke="#000" stroke-width="2.1"/></svg>
<div class="t" style="left:581px;top:498px;font-size:12px;line-height:12px;color:#000;letter-spacing:-0.024px;">Grid</div>
<div class="t" style="right:645px;top:498px;font-size:12px;line-height:12px;color:#000;">G</div>
<div style="left:554px;top:518px;width:169px;height:1px;background:#b4b4b4;"></div>
<svg style="left:561px;top:530px;" width="12" height="12" viewBox="0 0 12 12"><path d="M2.5 1.8L9.3 5.6L2.5 9.4z" fill="none" stroke="#22b038" stroke-width="1.3"/></svg>
<div class="t" style="left:581px;top:530px;font-size:12px;line-height:12px;color:#000;letter-spacing:-0.261px;">Start Single Test</div>
<div style="left:0px;top:728px;width:1366px;height:40px;background:linear-gradient(90deg,#1e201b 0%,#20221c 35%,#2c2a22 52%,#39342a 66%,#383329 75%,#2e2b22 88%,#27251e 100%);"></div>
<svg style="left:15px;top:739px;" width="18" height="18" viewBox="0 0 18 18"><g fill="#fff"><path d="M0.8 2.3L7.3 1.4V8.4H0.8z"/><path d="M8.4 1.3L17.3 0.3V8.4H8.4z"/><path d="M0.8 9.5H7.3V16.4L0.8 15.6z"/><path d="M8.4 9.5H17.3V17.5L8.4 16.5z"/></g></svg>
<svg style="left:62px;top:739px;" width="20" height="18" viewBox="0 0 20 18"><g fill="none" stroke="#fff" stroke-width="1"><path d="M2.5 0.5V2.5H12.5V0.5"/><rect x="2.5" y="5.5" width="10" height="6"/><path d="M2.5 16.5V14.5H12.5V16.5"/><path d="M16.5 1v3M16.5 8v9"/></g><rect x="15.5" y="5" width="2" height="2" fill="#fff"/></svg>
<svg style="left:110px;top:735px;" width="26" height="26" viewBox="0 0 26 26"><path d="M8 5V3.5a5 2 0 0 1 10 0V5" fill="none" stroke="#2aa7e8" stroke-width="2"/><rect x="1" y="5" width="24" height="20" rx="3" fill="#f3f3f3"/><rect x="8" y="10" width="4.5" height="4.5" fill="#f25022"/><rect x="13.5" y="10" width="4.5" height="4.5" fill="#7fba00"/><rect x="8" y="15.5" width="4.5" height="4.5" fill="#00a4ef"/><rect x="13.5" y="15.5" width="4.5" height="4.5" fill="#ffb900"/></svg>
<svg style="left:160px;top:736px;" width="25" height="25" viewBox="0 0 25 25"><circle cx="12.5" cy="12.5" r="12" fill="#db4437"/><path d="M12.5 12.5L2.1 6.5A12 12 0 0 0 12.5 24.5z" fill="#0f9d58"/><path d="M12.5 12.5L22.9 6.5A12 12 0 0 1 12.5 24.5z" fill="#f4b400"/><circle cx="12.5" cy="12.5" r="5.5" fill="#fff"/><circle cx="12.5" cy="12.5" r="4.3" fill="#4285f4"/></svg>
<svg style="left:200px;top:730px;" width="40" height="36" viewBox="0 0 40 36"><defs><linearGradient id="eg" x1="0" y1="0" x2="1" y2="0.4"><stop offset="0" stop-color="#2aa8ec"/><stop offset="0.55" stop-color="#35c0c8"/><stop offset="1" stop-color="#62d84a"/></linearGradient><linearGradient id="eb" x1="0" y1="0" x2="0.3" y2="1"><stop offset="0" stop-color="#1a88e0"/><stop offset="1" stop-color="#0a5cb8"/></linearGradient></defs><circle cx="21" cy="17.8" r="12.1" fill="url(#eg)"/><path d="M9 19C9 14 13 12 17 12.3C21 12.6 23 15 22.5 17.5C20 16 16.5 18 17 22C17.5 26 22 27.5 25.5 27.5C28 27.5 30 26.5 31.3 24C29 28 25 30 21 30C14 30 9 25 9 19Z" fill="url(#eb)"/><path d="M17 22C16.5 18 20 16 22.5 17.5C22.8 19.5 22 21 19.8 21.3C21.5 22.5 25 23.5 31.3 23.8C30 26 28 27.5 25.5 27.5C22 27.5 17.5 26 17 22Z" fill="#0b4ea0"/><circle cx="20.8" cy="18.8" r="2.6" fill="#22241d"/></svg>
<svg style="left:257px;top:736px;" width="26" height="24" viewBox="0 0 26 24"><path d="M1 3h9l2 2h13v18H1z" fill="#e8b730"/><rect x="1" y="7" width="24" height="16" fill="#f8d775"/><path d="M8 22v-7h10v7h-3v-4h-4v4z" fill="#2b8de0"/></svg>
<svg style="left:306px;top:736px;" width="26" height="25" viewBox="0 0 26 25"><rect x="9" y="3" width="16" height="18" rx="2" fill="#1b9de2"/><rect x="12" y="13" width="13" height="11" rx="1" fill="#28b4f0"/><rect x="1" y="6" width="13" height="13" rx="2" fill="#0f6cbd"/><text x="7.5" y="16.5" font-family="Liberation Sans" font-size="11" font-weight="bold" fill="#fff" text-anchor="middle">O</text></svg>
<svg style="left:350px;top:730px;" width="40" height="36" viewBox="0 0 40 36"><defs><linearGradient id="cpl" x1="0" y1="0" x2="0" y2="1"><stop offset="0" stop-color="#1aa0f0"/><stop offset="0.5" stop-color="#2ab8a0"/><stop offset="1" stop-color="#f8d010"/></linearGradient><linearGradient id="cpr" x1="0" y1="0" x2="0" y2="1"><stop offset="0" stop-color="#a04ef0"/><stop offset="0.5" stop-color="#f05a98"/><stop offset="1" stop-color="#f8b040"/></linearGradient></defs><path d="M18 8L22 8C23.5 8 24.2 9 24.6 10.5L25.5 14.5L20.5 14.5z" fill="#1440c8"/><path d="M12.5 23L17.5 23L17.5 28.3L15.5 28.3C14.5 28.3 13.8 27.5 13.4 26.5z" fill="#f04a28"/><path d="M12.5 8C11 8 10.2 9 9.8 10.5L7.3 20C6.8 22 7.8 23 9.3 23L16 23L19.8 10.5C20.3 8.8 19.5 8 18 8Z" fill="url(#cpl)"/><path d="M23.5 14.3C25 14.3 29.5 14.3 29.2 16.5L26.5 26C26 27.6 25 28.3 23.5 28.3L16.8 28.3L20.5 16C21 14.7 22 14.3 23.5 14.3Z" fill="url(#cpr)"/></svg>
<svg style="left:400px;top:730px;" width="36" height="36" viewBox="0 0 36 36"><defs><radialGradient id="ffb" cx="0.5" cy="0.7" r="0.7"><stop offset="0" stop-color="#ff9a1a"/><stop offset="0.6" stop-color="#ff5a3a"/><stop offset="1" stop-color="#e8308a"/></radialGradient></defs><circle cx="16.8" cy="18.5" r="11.5" fill="url(#ffb)"/><path d="M20 6C24 7 28.5 12 28.2 19C27 14 23 11 20.5 11C21.5 9 21 7 20 6Z" fill="#ffc42a"/><path d="M6 14C7 10 9 8 11 7C10.5 9 11 10 12 10.5C13 9.5 15 9.5 16 10C12 11 9 14 6 14Z" fill="#ffb22a"/><circle cx="16.5" cy="19" r="5.3" fill="#6a3ce0"/><path d="M11.5 17C13 14 17 13 20 14.5C17 14.5 14 16 13.5 18z" fill="#ff8a2a"/></svg>
<svg style="left:453px;top:736px;" width="30" height="28" viewBox="0 0 30 28"><circle cx="12.5" cy="12.5" r="12" fill="#db4437"/><path d="M12.5 12.5L2.1 6.5A12 12 0 0 0 12.5 24.5z" fill="#0f9d58"/><path d="M12.5 12.5L22.9 6.5A12 12 0 0 1 12.5 24.5z" fill="#f4b400"/><circle cx="12.5" cy="12.5" r="5.5" fill="#fff"/><circle cx="12.5" cy="12.5" r="4.3" fill="#4285f4"/><circle cx="20" cy="20" r="7" fill="#9a8a88"/><circle cx="20" cy="17.5" r="2.5" fill="#4a3a30"/><path d="M15 25a5 4 0 0 1 10 0z" fill="#b8a0d8"/></svg>
<svg style="left:504px;top:735px;" width="24" height="28" viewBox="0 0 24 28"><path d="M3 5L17 1v21L3 26z" fill="#c8901a"/><path d="M17 4h5v18l-5 3z" fill="#f2c21a"/><text x="10" y="17" font-family="Liberation Sans" font-size="13" font-weight="bold" fill="#fff" text-anchor="middle">5</text></svg>
<svg style="left:550px;top:730px;" width="30" height="36" viewBox="0 0 30 36"><path d="M9 7L24 9L24.5 27L4 25.5z" fill="#8fd0e8"/><path d="M9 7L24 9L23.8 13L8 11z" fill="#d8f0f8"/><path d="M4 25.5L24.5 27L22 28.5L2.5 27z" fill="#e8f4f8"/><path d="M24 9L25.5 10L26 27.5L24.5 27z" fill="#c8a060"/><path d="M10 7.5l0 -1.5M13 8l0 -1.5M16 8.4l0 -1.5M19 8.8l0 -1.5M22 9.2l0 -1.5" stroke="#d0d0d0" stroke-width="1"/></svg>
<svg style="left:600px;top:737px;" width="26" height="23" viewBox="0 0 26 23"><rect x="8" y="1" width="17" height="21" rx="1.5" fill="#21a366"/><rect x="8" y="1" width="17" height="7" fill="#33c481"/><rect x="8" y="15" width="17" height="7" fill="#107c41"/><rect x="1" y="5" width="13" height="13" rx="1.5" fill="#107c41"/><text x="7.5" y="15.5" font-family="Liberation Sans" font-size="10" font-weight="bold" fill="#fff" text-anchor="middle">X</text></svg>
<svg style="left:645px;top:730px;" width="40" height="36" viewBox="0 0 40 36"><path d="M10.5 10A8.5 8.5 0 1 1 19 23.5" fill="none" stroke="#e03a10" stroke-width="3.2"/><path d="M10.3 13.5A8.5 8.5 0 0 0 13 21" fill="none" stroke="#c83a10" stroke-width="1.5"/><path d="M17.8 7.5L17.5 21" stroke="#d0d0d0" stroke-width="2.6"/><path d="M22.5 14L16.5 21" stroke="#b8b8b8" stroke-width="2.4"/><circle cx="11.3" cy="23.8" r="3.2" fill="none" stroke="#1a78d8" stroke-width="2.2"/><circle cx="19" cy="26.8" r="3.2" fill="none" stroke="#28b0f0" stroke-width="2.2"/></svg>
<div style="left:687px;top:728px;width:48px;height:40px;background:#494a40;"></div>
<div style="left:699px;top:736px;width:24px;height:24px;background:#ffde00;"></div>
<div class="t" style="left:511px;width:400px;text-align:center;top:744px;font-size:6px;line-height:6px;color:#3a3000;letter-spacing:-0.2px">exness</div>
<svg style="left:747px;top:736px;" width="27" height="25" viewBox="0 0 27 25"><ellipse cx="11" cy="14" rx="10" ry="8.5" fill="#b8d8f0" transform="rotate(-15 11 14)"/><circle cx="6" cy="13" r="2" fill="#e84040"/><circle cx="10" cy="9" r="2" fill="#40b040"/><circle cx="15" cy="8" r="2" fill="#f0c020"/><circle cx="11" cy="17" r="2" fill="#304880"/><path d="M12 23L23 4" stroke="#e89030" stroke-width="2.5"/><path d="M21 7L25 1" stroke="#d07020" stroke-width="3"/></svg>
<div style="left:254px;top:766px;width:32px;height:2px;background:#76b9ed;"></div>
<div style="left:450px;top:766px;width:32px;height:2px;background:#76b9ed;"></div>
<div style="left:499px;top:766px;width:32px;height:2px;background:#76b9ed;"></div>
<div style="left:548px;top:766px;width:32px;height:2px;background:#76b9ed;"></div>
<div style="left:597px;top:766px;width:32px;height:2px;background:#76b9ed;"></div>
<div style="left:646px;top:766px;width:32px;height:2px;background:#76b9ed;"></div>
<div style="left:691px;top:766px;width:40px;height:2px;background:#76b9ed;"></div>
<div style="left:744px;top:766px;width:32px;height:2px;background:#76b9ed;"></div>
<svg style="left:982px;top:732px;" width="30" height="32" viewBox="0 0 30 32"><defs><radialGradient id="fl" cx="0.55" cy="0.75" r="0.7"><stop offset="0" stop-color="#ffd030"/><stop offset="0.6" stop-color="#ff8a20"/><stop offset="1" stop-color="#e84a20"/></radialGradient></defs><path d="M10.5 8.5C11 10.5 13.8 12 13.8 15A3.6 3.3 0 0 1 6.8 15C6.8 12.5 9 12 8.8 10.2C9.8 11 10.4 10 10.5 8.5z" fill="url(#fl)"/><rect x="16" y="5" width="7.3" height="16" rx="3.6" fill="#dce9f6"/><circle cx="19.6" cy="22.5" r="5.2" fill="#dce9f6"/><rect x="18.1" y="12" width="3" height="9" fill="#e8284a"/><circle cx="19.6" cy="22.5" r="3.6" fill="#e8284a"/><circle cx="20.5" cy="21.8" r="0.9" fill="#ffb0c0"/></svg>
<div class="t" style="left:1019px;top:740px;font-size:14px;line-height:14px;color:#fff;letter-spacing:-0.083px;">Hot days ahead</div>
<svg style="left:1139px;top:741px;" width="16" height="12" viewBox="0 0 16 12"><path d="M2 9L8 3L14 9" fill="none" stroke="#fff" stroke-width="1.5"/></svg>
<svg style="left:1162px;top:739px;" width="20" height="18" viewBox="0 0 20 18"><path d="M2 6h3l4-4v14l-4-4H2z" fill="none" stroke="#fff" stroke-width="1.2"/><path d="M12 6a3 3 0 0 1 0 6M14.5 3.5a6.5 6.5 0 0 1 0 11" fill="none" stroke="#fff" stroke-width="1.2"/></svg>
<svg style="left:1188px;top:739px;" width="18" height="18" viewBox="0 0 18 18"><path d="M1 16a15 15 0 0 1 15-15M4 16a12 12 0 0 1 12-12M7 16a9 9 0 0 1 9-9M10 16a6 6 0 0 1 6-6" fill="none" stroke="#fff" stroke-width="1"/><circle cx="15" cy="15" r="1.8" fill="#fff"/></svg>
<div class="t" style="left:1213px;top:742px;font-size:12px;line-height:12px;color:#fff;letter-spacing:-1.508px;">ENG</div>
<div class="t" style="left:1253px;top:733px;font-size:12px;line-height:12px;color:#fff;letter-spacing:-0.100px;">07:10 AM</div>
<div class="t" style="left:1249px;top:751px;font-size:12px;line-height:12px;color:#fff;letter-spacing:-0.321px;">27-05-2025</div>
<svg style="left:1323px;top:738px;" width="28" height="26" viewBox="0 0 28 26"><path d="M2 2h18v13H9l-4 4v-4H2z" fill="#fff"/><path d="M5 6h12M5 9h12M5 12h8" stroke="#333" stroke-width="1"/><circle cx="18" cy="17" r="7" fill="#3a3a3a" stroke="#ccc" stroke-width="1"/><text x="18" y="21" font-family="Liberation Sans" font-size="11" font-weight="bold" fill="#fff" text-anchor="middle">2</text></svg>
</body></html>
